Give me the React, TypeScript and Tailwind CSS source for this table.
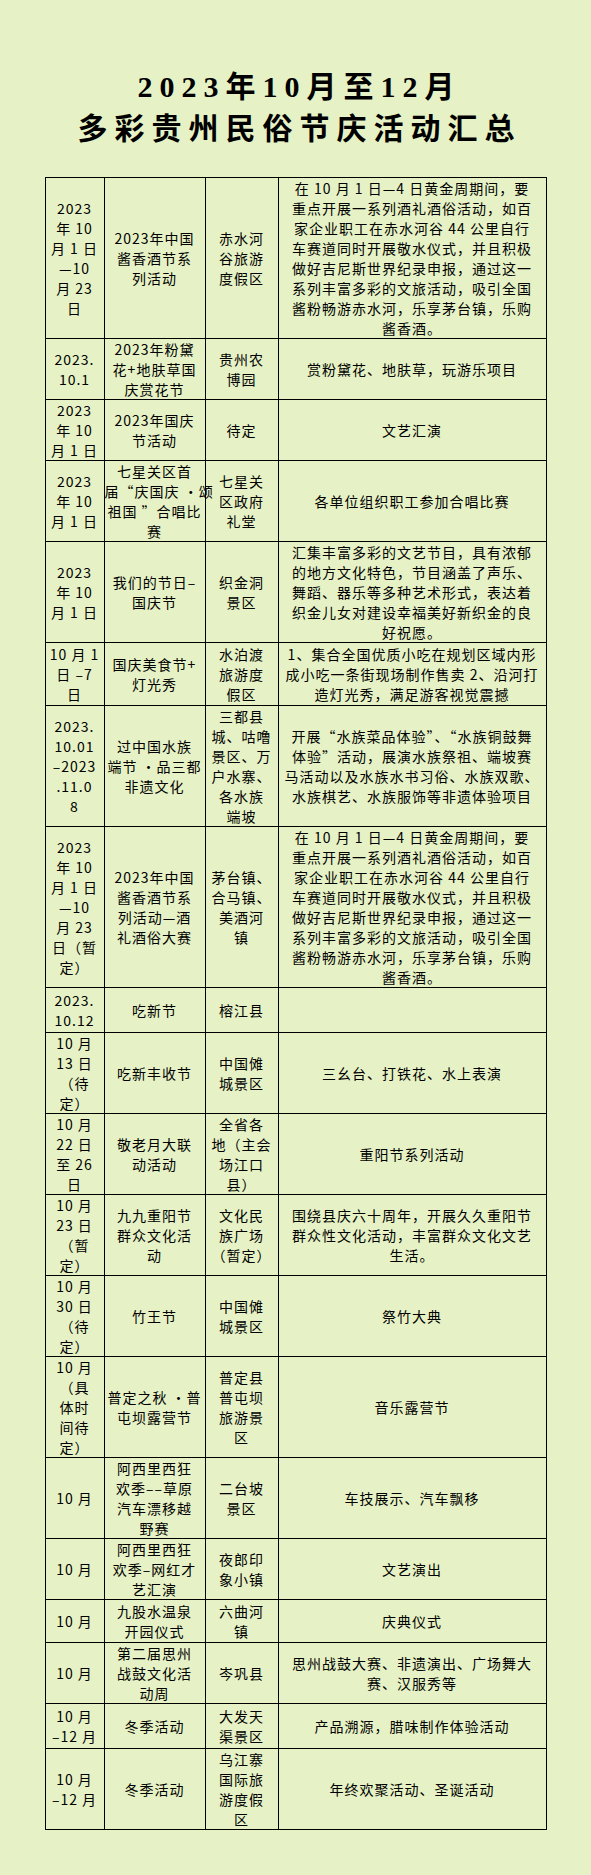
import React from 'react'

interface Row {
  h: string
  date: string[]
  name: string[]
  place: string[]
  content: string[]
}

const baijiu = [
  '在 10 月 1 日—4 日黄金周期间，要',
  '重点开展一系列酒礼酒俗活动，如百',
  '家企业职工在赤水河谷 44 公里自行',
  '车赛道同时开展敬水仪式，并且积极',
  '做好吉尼斯世界纪录申报，通过这一',
  '系列丰富多彩的文旅活动，吸引全国',
  '酱粉畅游赤水河，乐享茅台镇，乐购',
  '酱香酒。',
]

const rows: Row[] = [
  {
    h: 'h-[161px]',
    date: ['2023', '年 10', '月 1 日', '—10', '月 23', '日'],
    name: ['2023年中国', '酱香酒节系', '列活动'],
    place: ['赤水河', '谷旅游', '度假区'],
    content: baijiu,
  },
  {
    h: 'h-[60px]',
    date: ['2023.', '10.1'],
    name: ['2023年粉黛', '花+地肤草国', '庆赏花节'],
    place: ['贵州农', '博园'],
    content: ['赏粉黛花、地肤草，玩游乐项目'],
  },
  {
    h: 'h-[61px]',
    date: ['2023', '年 10', '月 1 日'],
    name: ['2023年国庆', '节活动'],
    place: ['待定'],
    content: ['文艺汇演'],
  },
  {
    h: 'h-[80px]',
    date: ['2023', '年 10', '月 1 日'],
    name: ['七星关区首', '届“庆国庆 •颂', '祖国 ”合唱比', '赛'],
    place: ['七星关', '区政府', '礼堂'],
    content: ['各单位组织职工参加合唱比赛'],
  },
  {
    h: 'h-[100px]',
    date: ['2023', '年 10', '月 1 日'],
    name: ['我们的节日–', '国庆节'],
    place: ['织金洞', '景区'],
    content: [
      '汇集丰富多彩的文艺节目，具有浓郁',
      '的地方文化特色，节目涵盖了声乐、',
      '舞蹈、器乐等多种艺术形式，表达着',
      '织金儿女对建设幸福美好新织金的良',
      '好祝愿。',
    ],
  },
  {
    h: 'h-[63px]',
    date: ['10 月 1', '日 –7', '日'],
    name: ['国庆美食节+', '灯光秀'],
    place: ['水泊渡', '旅游度', '假区'],
    content: [
      '1、集合全国优质小吃在规划区域内形',
      '成小吃一条街现场制作售卖 2、沿河打',
      '造灯光秀，满足游客视觉震撼',
    ],
  },
  {
    h: 'h-[120px]',
    date: ['2023.', '10.01', '–2023', '.11.0', '8'],
    name: ['过中国水族', '端节 •品三都', '非遗文化'],
    place: ['三都县', '城、咕噜', '景区、万', '户水寨、', '各水族', '端坡'],
    content: [
      '开展“水族菜品体验”、“水族铜鼓舞',
      '体验”活动，展演水族祭祖、端坡赛',
      '马活动以及水族水书习俗、水族双歌、',
      '水族棋艺、水族服饰等非遗体验项目',
    ],
  },
  {
    h: 'h-[160px]',
    date: ['2023', '年 10', '月 1 日', '—10', '月 23', '日（暂', '定）'],
    name: ['2023年中国', '酱香酒节系', '列活动—酒', '礼酒俗大赛'],
    place: ['茅台镇、', '合马镇、', '美酒河', '镇'],
    content: baijiu,
  },
  {
    h: 'h-[45px]',
    date: ['2023.', '10.12'],
    name: ['吃新节'],
    place: ['榕江县'],
    content: [],
  },
  {
    h: 'h-[81px]',
    date: ['10 月', '13 日', '（待', '定）'],
    name: ['吃新丰收节'],
    place: ['中国傩', '城景区'],
    content: ['三幺台、打铁花、水上表演'],
  },
  {
    h: 'h-[80px]',
    date: ['10 月', '22 日', '至 26', '日'],
    name: ['敬老月大联', '动活动'],
    place: ['全省各', '地（主会', '场江口', '县）'],
    content: ['重阳节系列活动'],
  },
  {
    h: 'h-[80px]',
    date: ['10 月', '23 日', '（暂', '定）'],
    name: ['九九重阳节', '群众文化活', '动'],
    place: ['文化民', '族广场', '（暂定）'],
    content: [
      '围绕县庆六十周年，开展久久重阳节',
      '群众性文化活动，丰富群众文化文艺',
      '生活。',
    ],
  },
  {
    h: 'h-[81px]',
    date: ['10 月', '30 日', '（待', '定）'],
    name: ['竹王节'],
    place: ['中国傩', '城景区'],
    content: ['祭竹大典'],
  },
  {
    h: 'h-[100px]',
    date: ['10 月', '（具', '体时', '间待', '定）'],
    name: ['普定之秋 •普', '屯坝露营节'],
    place: ['普定县', '普屯坝', '旅游景', '区'],
    content: ['音乐露营节'],
  },
  {
    h: 'h-[80px]',
    date: ['10 月'],
    name: ['阿西里西狂', '欢季––草原', '汽车漂移越', '野赛'],
    place: ['二台坡', '景区'],
    content: ['车技展示、汽车飘移'],
  },
  {
    h: 'h-[60px]',
    date: ['10 月'],
    name: ['阿西里西狂', '欢季–网红才', '艺汇演'],
    place: ['夜郎印', '象小镇'],
    content: ['文艺演出'],
  },
  {
    h: 'h-[43px]',
    date: ['10 月'],
    name: ['九股水温泉', '开园仪式'],
    place: ['六曲河', '镇'],
    content: ['庆典仪式'],
  },
  {
    h: 'h-[59px]',
    date: ['10 月'],
    name: ['第二届思州', '战鼓文化活', '动周'],
    place: ['岑巩县'],
    content: ['思州战鼓大赛、非遗演出、广场舞大', '赛、汉服秀等'],
  },
  {
    h: 'h-[45px]',
    date: ['10 月', '–12 月'],
    name: ['冬季活动'],
    place: ['大发天', '渠景区'],
    content: ['产品溯源，腊味制作体验活动'],
  },
  {
    h: 'h-[81px]',
    date: ['10 月', '–12 月'],
    name: ['冬季活动'],
    place: ['乌江寨', '国际旅', '游度假', '区'],
    content: ['年终欢聚活动、圣诞活动'],
  },
]

const Lines = ({ lines }: { lines: string[] }) => (
  <>
    {lines.map((l, i) => (
      <span key={i} className="block whitespace-nowrap">
        {l}
      </span>
    ))}
  </>
)

export default function App() {
  return (
    <div className="min-h-[1875px] w-[591px] bg-[#e6f2c5] pt-[66px] font-['Noto_Sans_CJK_SC',sans-serif] text-black">
      {/* 标题 */}
      <h1 className="pl-[8px] text-center font-['Liberation_Serif','Noto_Sans_CJK_SC',serif] text-[30px] font-bold leading-[42px] tracking-[7px]">
        <span className="block">2023年10月至12月</span>
        <span className="block">多彩贵州民俗节庆活动汇总</span>
      </h1>

      {/* 活动表 */}
      <table className="mx-auto mt-[27px] w-[501px] table-fixed border-collapse text-[14px] leading-[20px] tracking-[1px]">
        <colgroup>
          <col className="w-[59px]" />
          <col className="w-[101px]" />
          <col className="w-[73px]" />
          <col className="w-[268px]" />
        </colgroup>
        <tbody>
          {rows.map((r, i) => (
            <tr key={i} className={r.h}>
              <td className="border border-black p-0 text-center align-middle">
                <Lines lines={r.date} />
              </td>
              <td className="border border-black p-0 text-center align-middle">
                <Lines lines={r.name} />
              </td>
              <td className="border border-black p-0 text-center align-middle">
                <Lines lines={r.place} />
              </td>
              <td className="border border-black p-0 text-center align-middle">
                <Lines lines={r.content} />
              </td>
            </tr>
          ))}
        </tbody>
      </table>
    </div>
  )
}
